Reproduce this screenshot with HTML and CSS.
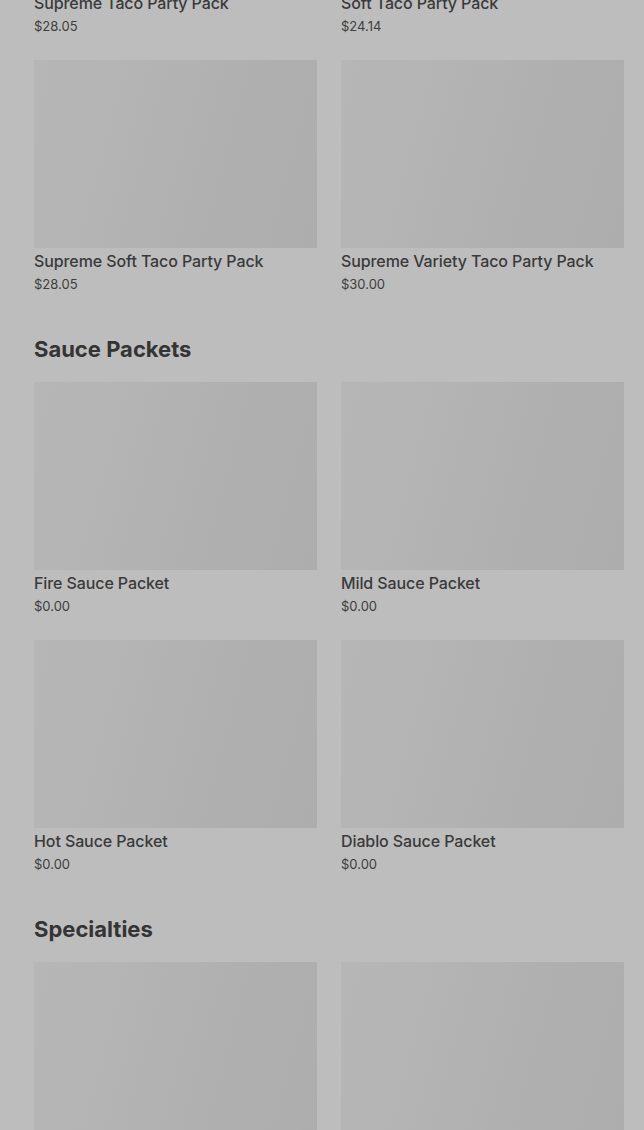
FILE: index.html
```html
<!DOCTYPE html>
<html>
<head>
<meta charset="utf-8">
<link rel="stylesheet" href="styles.css">
</head>
<body>
<main class="menu">
  <section class="section first">
    <div class="grid">
      <div class="card"><div class="thumb"></div><div class="title">Supreme Taco Party Pack</div><div class="price">$28.05</div></div>
      <div class="card"><div class="thumb"></div><div class="title">Soft Taco Party Pack</div><div class="price">$24.14</div></div>
      <div class="card"><div class="thumb"></div><div class="title">Supreme Soft Taco Party Pack</div><div class="price">$28.05</div></div>
      <div class="card"><div class="thumb"></div><div class="title">Supreme Variety Taco Party Pack</div><div class="price">$30.00</div></div>
    </div>
  </section>
  <section class="section">
    <h2 class="heading">Sauce Packets</h2>
    <div class="grid">
      <div class="card"><div class="thumb"></div><div class="title">Fire Sauce Packet</div><div class="price">$0.00</div></div>
      <div class="card"><div class="thumb"></div><div class="title">Mild Sauce Packet</div><div class="price">$0.00</div></div>
      <div class="card"><div class="thumb"></div><div class="title">Hot Sauce Packet</div><div class="price">$0.00</div></div>
      <div class="card"><div class="thumb"></div><div class="title">Diablo Sauce Packet</div><div class="price">$0.00</div></div>
    </div>
  </section>
  <section class="section">
    <h2 class="heading">Specialties</h2>
    <div class="grid">
      <div class="card"><div class="thumb"></div></div>
      <div class="card"><div class="thumb"></div></div>
    </div>
  </section>
</main>
</body>
</html>
```

FILE: styles.css
```css
html, body {
  margin: 0;
  padding: 0;
  background: #bdbdbd;
  overflow: hidden;
}
body {
  font-family: Inter, "Noto Sans", sans-serif;
  color: #383838;
}
.menu {
  padding: 0 20px 0 34px;
  margin-top: -198px;
}
.grid {
  display: grid;
  grid-template-columns: 1fr 1fr;
  column-gap: 24px;
  row-gap: 25px;
}
.card {
  display: flex;
  flex-direction: column;
}
.thumb {
  height: 188px;
  background: linear-gradient(105deg, #b6b6b6 0%, #b4b4b4 30%, #b0b0b0 60%, #adadad 100%);
}
.title {
  margin-top: 2px;
  font-size: 16px;
  line-height: 22px;
  font-weight: 500;
  color: #3a3a3a;
  letter-spacing: -0.1px;
  white-space: nowrap;
}
.price {
  margin-top: 3px;
  font-size: 13px;
  line-height: 18px;
  font-weight: 400;
  color: #3e3e3e;
}
.heading {
  margin: 42px 0 19px;
  font-size: 22px;
  line-height: 28px;
  font-weight: 700;
  color: #343434;
}
```
